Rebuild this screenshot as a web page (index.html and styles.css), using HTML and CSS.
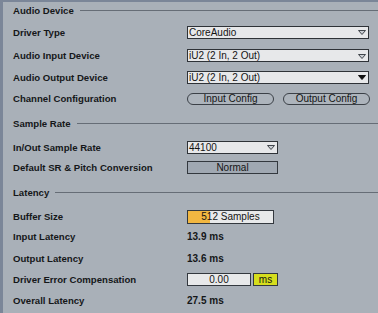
FILE: index.html
```html
<!DOCTYPE html>
<html>
<head>
<meta charset="utf-8">
<link rel="stylesheet" href="styles.css">
</head>
<body>
<div class="panel">
  <div class="head h17"><span>Audio Device</span></div>
  <div class="row h26"><span class="label">Driver Type</span>
    <div class="select wide"><span>CoreAudio</span>
      <svg class="arrow" width="8" height="5" viewBox="0 0 8 5"><polygon points="0.5,0.5 7.5,0.5 4,4.5" fill="#c9cdd2" stroke="#41464c" stroke-width="1"/></svg></div></div>
  <div class="row h21"><span class="label">Audio Input Device</span>
    <div class="select wide"><span>iU2 (2 In, 2 Out)</span>
      <svg class="arrow" width="8" height="5" viewBox="0 0 8 5"><polygon points="0.5,0.5 7.5,0.5 4,4.5" fill="#c9cdd2" stroke="#41464c" stroke-width="1"/></svg></div></div>
  <div class="row h22"><span class="label">Audio Output Device</span>
    <div class="select wide"><span>iU2 (2 In, 2 Out)</span>
      <svg class="arrow" width="8" height="5" viewBox="0 0 8 5"><polygon points="0.5,0.5 7.5,0.5 4,4.5" fill="#111" stroke="#111" stroke-width="1"/></svg></div></div>
  <div class="row h21"><span class="label">Channel Configuration</span>
    <div class="btns"><div class="pill">Input Config</div><div class="pill">Output Config</div></div></div>

  <div class="head h28"><span>Sample Rate</span></div>
  <div class="row h20"><span class="label">In/Out Sample Rate</span>
    <div class="select mid"><span>44100</span>
      <svg class="arrow" width="8" height="5" viewBox="0 0 8 5"><polygon points="0.5,0.5 7.5,0.5 4,4.5" fill="#c9cdd2" stroke="#41464c" stroke-width="1"/></svg></div></div>
  <div class="row h21"><span class="label">Default SR &amp; Pitch Conversion</span>
    <div class="button mid">Normal</div></div>

  <div class="head h29"><span>Latency</span></div>
  <div class="row h19"><span class="label">Buffer Size</span>
    <div class="slider"><div class="fill" style="width:22px"></div><span>512 Samples</span></div></div>
  <div class="row h21"><span class="label">Input Latency</span><span class="value">13.9 ms</span></div>
  <div class="row h22"><span class="label">Output Latency</span><span class="value">13.6 ms</span></div>
  <div class="row h21"><span class="label">Driver Error Compensation</span>
    <div class="pair"><div class="field">0.00</div><div class="unit">ms</div></div></div>
  <div class="row h21"><span class="label">Overall Latency</span><span class="value">27.5 ms</span></div>
</div>
</body>
</html>
```
FILE: styles.css
```css
html, body {
  margin: 0;
  padding: 0;
  background: #a9b0b8;
}
body {
  width: 378px;
  height: 313px;
  overflow: hidden;
  font-family: "Liberation Sans", Arial, sans-serif;
  color: #151719;
}
.panel {
  box-sizing: border-box;
  height: 313px;
  border-left: 3px solid #7b8698;
  border-top: 2px solid #7b8698;
  padding-left: 10px;
}
.head {
  display: flex;
  align-items: center;
  font-weight: bold;
  font-size: 9.6px;
}
.head::after {
  content: "";
  flex: 1;
  border-top: 1px solid #666d76;
  margin-left: 6px;
}
.row {
  display: flex;
  align-items: center;
}
.h17 { height: 17px; }
.h19 { height: 19px; }
.h20 { height: 20px; }
.h21 { height: 21px; }
.h22 { height: 22px; }
.h26 { height: 26px; }
.h28 { height: 28px; }
.h29 { height: 29px; }
.label {
  width: 174px;
  flex: none;
  font-weight: bold;
  font-size: 9.6px;
}
.value {
  font-weight: bold;
  font-size: 10px;
}
.select {
  box-sizing: border-box;
  height: 13px;
  border: 1px solid #2e3237;
  background: #e7e8ea;
  display: flex;
  align-items: center;
  justify-content: space-between;
  padding: 0 2px 0 1px;
  font-size: 10px;
  color: #141414;
}
.wide { width: 182px; }
.mid { width: 91px; }
.arrow { display: block; margin-top: 1px; }
.btns {
  display: flex;
  gap: 9px;
}
.pill {
  box-sizing: border-box;
  width: 87px;
  height: 12px;
  border: 1px solid #3b4047;
  border-radius: 6px;
  background: #adb4bc;
  font-size: 10px;
  line-height: 10px;
  text-align: center;
  color: #141414;
}
.button {
  box-sizing: border-box;
  height: 13px;
  border: 1px solid #33383e;
  background: #a0a8b2;
  font-size: 10px;
  line-height: 11px;
  text-align: center;
  color: #141414;
}
.slider {
  position: relative;
  box-sizing: border-box;
  width: 87px;
  height: 14px;
  border: 1px solid #33383e;
  background: #e8e9ea;
  font-size: 10px;
  line-height: 12px;
  text-align: center;
  color: #141414;
}
.slider .fill {
  position: absolute;
  left: 0;
  top: 0;
  bottom: 0;
  background: #f2b741;
}
.slider span { position: relative; }
.pair {
  display: flex;
  gap: 2px;
}
.field, .unit {
  box-sizing: border-box;
  height: 13px;
  border: 1px solid #33383e;
  font-size: 10px;
  line-height: 11px;
  text-align: center;
  color: #141414;
}
.field {
  width: 64px;
  background: #e8e9ea;
}
.unit {
  width: 25px;
  background: #d6de1d;
}
```
